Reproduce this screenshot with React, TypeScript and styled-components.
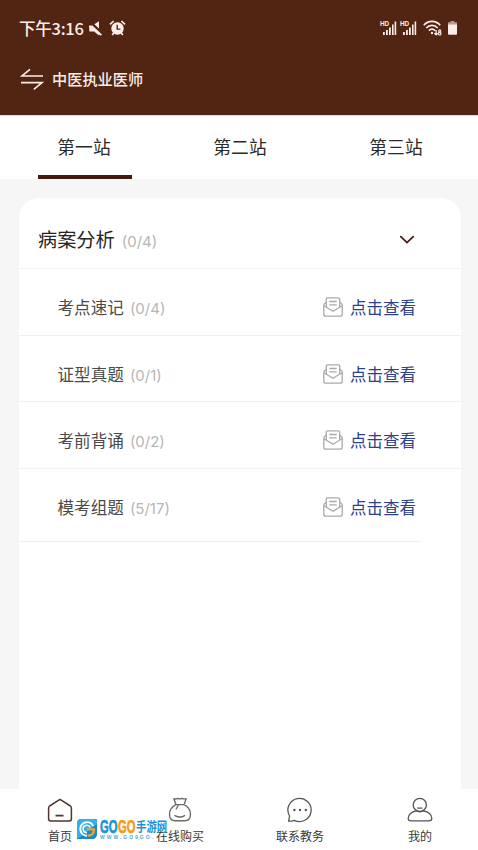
import React from 'react';
import styled, { createGlobalStyle } from 'styled-components';

const GlobalStyle = createGlobalStyle`
  * {
    box-sizing: border-box;
  }

  body {
    margin: 0;
    background: #f6f6f6;
    font-family: Roboto, 'Noto Sans CJK SC', sans-serif;
  }

  svg {
    display: block;
    flex: none;
  }

  button {
    border: none;
    background: none;
    padding: 0;
    font: inherit;
    cursor: pointer;
  }
`;

const Page = styled.div`
  display: flex;
  flex-direction: column;
  width: 478px;
  height: 850px;
  overflow: hidden;
`;

// Header
const Header = styled.header`
  flex: none;
  height: 116px;
  background: #522412;
  border-bottom: 1px solid #efd5cc;
  color: #fbeee9;
`;

const StatusBar = styled.div`
  display: flex;
  align-items: center;
  justify-content: space-between;
  height: 56px;
  padding: 0 21px 0 19px;
`;

const StatusGroup = styled.div<{ gap: number }>`
  display: flex;
  align-items: center;
  gap: ${({ gap }) => gap}px;
`;

const Clock = styled.span`
  font-family: 'Noto Sans CJK SC', sans-serif;
  font-size: 16.5px;
  font-weight: 500;
  line-height: 20px;
  letter-spacing: -0.25px;
`;

const TitleBar = styled.div`
  display: flex;
  align-items: center;
  gap: 8px;
  height: 46px;
  padding-left: 20px;
`;

const AppTitle = styled.h1`
  margin: 0;
  padding-top: 2px;
  font-size: 15.2px;
  font-weight: 500;
  line-height: 24px;
`;

// Tabs
const Tabs = styled.nav`
  display: flex;
  flex: none;
  height: 63px;
  padding: 0 4px 0 6px;
  background: #fff;
`;

const Tab = styled.button<{ $active: boolean }>`
  display: flex;
  flex: none;
  flex-direction: column;
  align-items: center;
  justify-content: space-between;
  width: 156px;
  padding-top: 19px;
  color: #2c2a2a;
  font-size: 17.8px;
  line-height: 26px;

  &::after {
    content: '';
    width: 94px;
    height: 4px;
    margin-left: 2px;
    background: ${({ $active }) => ($active ? '#421b10' : 'transparent')};
  }
`;

// Content
const Content = styled.main`
  display: flex;
  flex: 1;
  min-height: 0;
  padding: 19px 17px 0 19px;
`;

const Card = styled.section`
  flex: 1;
  background: #fff;
  border-radius: 20px 20px 0 0;
`;

const SectionHeader = styled.div`
  display: flex;
  align-items: center;
  justify-content: space-between;
  height: 71px;
  padding: 13px 46px 0 19px;
  border-bottom: 1px solid #f4f4f4;
`;

const Heading = styled.h2`
  display: flex;
  align-items: baseline;
  gap: 7px;
  margin: 0;
  padding-top: 4px;
  color: #262424;
  font-size: 19.2px;
  font-weight: 400;
  line-height: 28px;
`;

const Count = styled.span`
  color: #b6b6b6;
  font-family: Inter, sans-serif;
  font-size: 15px;
  font-weight: 400;
`;

const Row = styled.div<{ $height: number; $short?: boolean }>`
  display: flex;
  align-items: flex-start;
  justify-content: space-between;
  height: ${({ $height }) => $height}px;
  margin-right: ${({ $short }) => ($short ? 40 : 0)}px;
  padding: 25px ${({ $short }) => ($short ? 5 : 45)}px 0 38.5px;
  border-bottom: 1px solid #f0f0f0;
`;

const RowTitle = styled.div`
  display: flex;
  align-items: baseline;
  gap: 6px;
  padding-top: 2px;
  color: #4a4a4a;
  font-size: 16.6px;
  line-height: 26px;
`;

const ViewLink = styled.button`
  display: flex;
  align-items: center;
  gap: 7px;
  color: #2c408c;
  font-size: 16.5px;
  line-height: 26px;
`;

const LinkLabel = styled.span`
  padding-top: 2px;
  margin-bottom: -2px;
`;

// Bottom navigation
const BottomNav = styled.nav`
  position: relative;
  display: flex;
  flex: none;
  height: 61px;
  background: #fff;
`;

const NavItem = styled.button`
  display: flex;
  flex: none;
  flex-direction: column;
  align-items: center;
  width: 120px;
  padding-top: 7px;
  color: #3b3737;
  font-size: 12px;
  line-height: 18px;
  gap: 4px;
`;

// Site mark that floats over the bottom navigation
const SiteMark = styled.div`
  position: absolute;
  left: 76px;
  top: 29px;
  display: flex;
  align-items: center;
  gap: 2px;
`;

const MarkText = styled.div`
  display: flex;
  flex-direction: column;
`;

const MarkName = styled.div`
  display: flex;
  align-items: center;
  height: 16px;
  color: #1c93d6;
  white-space: nowrap;
`;

const MarkWord = styled.span<{ $color: string }>`
  display: block;
  width: 18px;
  color: ${({ $color }) => $color};
  font-family: 'Liberation Sans', sans-serif;
  font-size: 19px;
  font-weight: 700;
  line-height: 16px;
  -webkit-text-stroke: 0.7px currentColor;

  span {
    display: block;
    width: 30px;
    transform: scaleX(0.59);
    transform-origin: left;
  }
`;

const MarkSuffix = styled.span`
  display: block;
  width: 32px;
  font-size: 13px;
  font-weight: 700;
  line-height: 16px;
  transform: scaleX(0.8);
  transform-origin: left;
`;

const MarkUrl = styled.div`
  color: #4babdf;
  font-family: 'Liberation Sans', sans-serif;
  font-size: 5px;
  font-weight: 700;
  line-height: 5px;
  letter-spacing: 2px;
`;

const MuteIcon = () => (
  <svg width="13" height="15" viewBox="0 0 13 15" fill="currentColor">
    <path d="M0 4.5h3.4l9.6 9.1-1.2 1.2-2-1.6v1.3L5.2 10.6H.4zM5.3 3.2 10 .2v7.4z" />
  </svg>
);

const AlarmIcon = () => (
  <svg width="17" height="16" viewBox="0 0 17 16">
    <circle cx="8.5" cy="8.5" r="6.2" fill="currentColor" />
    <path d="M1 4.4 4.6 1M16 4.4 12.4 1" stroke="currentColor" strokeWidth="1.7" />
    <path d="m4.7 13-1.5 2m9.1-2 1.5 2" stroke="currentColor" strokeWidth="1.7" />
    <path d="M8.2 4.8v4.3h3.2" fill="none" stroke="#522412" strokeWidth="1.4" />
  </svg>
);

const SignalIcon = () => (
  <svg width="17" height="15" viewBox="0 0 17 15" fill="currentColor">
    <path d="M3 11h1.8v3H3zM6 9h1.8v5H6zM9 6.5h1.8V14H9zM12 3.5h1.6V14H12zM14.6.5h1.6V14h-1.6z" />
    <text x="0" y="5.2" fontFamily="Liberation Sans" fontSize="6.4" fontWeight="700">HD</text>
  </svg>
);

const WifiIcon = () => (
  <svg width="19" height="16" viewBox="0 0 19 16" fill="none" stroke="currentColor" strokeWidth="1.7">
    <path d="M.8 5.2c4.4-5.1 12-5.1 16.4 0M3.3 8c3.1-3.4 8.3-3.4 11.4 0M5.9 10.6c1.8-1.9 4.4-1.9 6.2 0" />
    <circle cx="9" cy="13" r="1.2" fill="currentColor" stroke="none" />
    <path d="M13.1 10v4.8m-1.6-1.6 1.6 1.7 1.6-1.7" strokeWidth="1.3" />
    <circle cx="16.7" cy="11" r="1.1" strokeWidth="1.1" />
    <circle cx="16.7" cy="13.7" r="1.3" strokeWidth="1.2" />
  </svg>
);

const BatteryIcon = () => (
  <svg width="9" height="14" viewBox="0 0 9 14">
    <path d="M2.6 0h3.8v1.3H9V4H0V1.3h2.6z" fill="#b59b91" />
    <path d="M0 3.5h9v9.3q0 1-1 1H1q-1 0-1-1z" fill="currentColor" />
  </svg>
);

const SwitchIcon = () => (
  <svg width="24" height="23" viewBox="0 0 24 23" fill="none" stroke="currentColor" strokeWidth="1.6">
    <path d="M23 8H2l8-6.6M1 14.6h21l-8.2 6.8" />
  </svg>
);

const ChevronIcon = () => (
  <svg width="16" height="10" viewBox="0 0 16 10" fill="none" stroke="#3d1d15" strokeWidth="1.8">
    <path d="m1.8 1.6 6.2 6 6.2-6" strokeLinecap="round" />
  </svg>
);

const MailIcon = () => (
  <svg width="20" height="20" viewBox="0 0 20 20" fill="none" stroke="#aaa" strokeWidth="1.3">
    <path d="M3.2 5.2 1.7 6.4Q.8 7.1.8 8.2v9q0 2 2 2h14.4q2 0 2-2v-9q0-1.1-.9-1.8l-1.5-1.2" />
    <path d="M3.3 10V2q0-1.2 1.2-1.2h11q1.2 0 1.2 1.2v8M1 8.8l9 5.4 9-5.4M6.3 4.5h7.4M6.3 7.8h7.4" />
  </svg>
);

const HomeIcon = () => (
  <svg width="26" height="28" viewBox="0 0 26 28" fill="none" stroke="#51362f" strokeWidth="1.5">
    <path d="M13 3.3 23.4 10q1 .8 1 2v11.1q0 1.9-2 1.9H3.6q-2 0-2-1.9V12q0-1.2 1-2z" strokeLinejoin="round" />
    <path d="M8.5 19.6h8" strokeWidth="1.8" />
  </svg>
);

const BagIcon = () => (
  <svg width="26" height="28" viewBox="0 0 26 28" fill="none" stroke="#6d6a6a" strokeWidth="1.4">
    <path d="M9 8.4 6.8 2.8q2.3.5 3.8-.5 2.3 1.1 4.3 0 1.7 1 4.3.3L17.2 8.4" strokeLinejoin="round" />
    <path d="M8.6 8.6h9M8.8 8.6C4.6 10.8 2.5 14.5 2.5 18.3q0 6.5 5.7 6.5h9.6q5.7 0 5.7-6.5c0-3.8-2.1-7.5-6.3-9.7" />
    <path d="M8 19.6q5 2.8 9.6 0M11.4 9l-2.2 4" strokeLinecap="round" />
  </svg>
);

const ChatIcon = () => (
  <svg width="26" height="28" viewBox="0 0 26 28" fill="none" stroke="#555" strokeWidth="1.3">
    <path d="M1.6 25.2 2.6 20A11.6 11.6 0 1 1 7.2 24.3q-2.3.9-5.6.9z" strokeLinejoin="round" />
    <g fill="#555" stroke="none">
      <circle cx="7.4" cy="14" r="1.2" />
      <circle cx="13" cy="14" r="1.2" />
      <circle cx="18.8" cy="14" r="1.2" />
    </g>
  </svg>
);

const UserIcon = () => (
  <svg width="26" height="28" viewBox="0 0 26 28" fill="none" stroke="#555" strokeWidth="1.3">
    <circle cx="12.8" cy="8.9" r="6.6" />
    <path d="M8.7 15C4.8 15.7 1.2 18.6 1.2 22.2q0 2.6 2.8 2.6h18q2.8 0 2.8-2.6c0-3.6-3.6-6.5-7.9-7.2-2.4.9-5.8.9-8.2 0z" />
    <path d="M10.2 11.8q2.6.6 5.2 0" />
  </svg>
);

const MarkLogo = () => (
  <svg width="22" height="22" viewBox="0 0 22 22" fill="none">
    <path d="M5 1h16v15q0 5-5 5H1V6q0-5 4-5z" fill="#1689d1" />
    <path d="M5 1h16v5L3 20H1V6q0-5 4-5z" fill="#37aee8" />
    <path d="M17.2 8A6.8 6.8 0 1 0 11 17.8" stroke="#fff" strokeWidth="2" />
    <path d="M14.2 9.4A3.7 3.7 0 1 0 11 14.7" stroke="#fff" strokeWidth="1.5" />
    <path d="M11 11.4h7c0 3.7-2.7 6-6.3 6.3" stroke="#f9a326" strokeWidth="2.2" />
  </svg>
);

const tabs = ['第一站', '第二站', '第三站'];

const rows = [
  { title: '考点速记', count: '(0/4)', height: 67 },
  { title: '证型真题', count: '(0/1)', height: 66 },
  { title: '考前背诵', count: '(0/2)', height: 67 },
  { title: '模考组题', count: '(5/17)', height: 73, short: true },
];

const navItems = [
  { label: '首页', icon: <HomeIcon /> },
  { label: '在线购买', icon: <BagIcon /> },
  { label: '联系教务', icon: <ChatIcon /> },
  { label: '我的', icon: <UserIcon /> },
];

const App: React.FC = () => {
  const [activeTab, setActiveTab] = React.useState(0);
  const [open, setOpen] = React.useState(true);

  return (
    <Page>
      <GlobalStyle />
      <Header>
        <StatusBar>
          <StatusGroup gap={5}>
            <Clock>下午3:16</Clock>
            <StatusGroup gap={7}>
              <MuteIcon />
              <AlarmIcon />
            </StatusGroup>
          </StatusGroup>
          <StatusGroup gap={6}>
            <StatusGroup gap={3}>
              <SignalIcon />
              <SignalIcon />
            </StatusGroup>
            <WifiIcon />
            <BatteryIcon />
          </StatusGroup>
        </StatusBar>
        <TitleBar>
          <SwitchIcon />
          <AppTitle>中医执业医师</AppTitle>
        </TitleBar>
      </Header>

      <Tabs>
        {tabs.map((tab, index) => (
          <Tab key={tab} $active={activeTab === index} onClick={() => setActiveTab(index)}>
            {tab}
          </Tab>
        ))}
      </Tabs>

      <Content>
        <Card>
          <SectionHeader>
            <Heading>
              病案分析 <Count>(0/4)</Count>
            </Heading>
            <button aria-label="展开" onClick={() => setOpen(!open)}>
              <ChevronIcon />
            </button>
          </SectionHeader>
          {open &&
            rows.map((row) => (
              <Row key={row.title} $height={row.height} $short={row.short}>
                <RowTitle>
                  {row.title} <Count>{row.count}</Count>
                </RowTitle>
                <ViewLink>
                  <MailIcon />
                  <LinkLabel>点击查看</LinkLabel>
                </ViewLink>
              </Row>
            ))}
        </Card>
      </Content>

      <BottomNav>
        {navItems.map((item) => (
          <NavItem key={item.label}>
            {item.icon}
            {item.label}
          </NavItem>
        ))}
        <SiteMark>
          <MarkLogo />
          <MarkText>
            <MarkName>
              <MarkWord $color="#1c93d6"><span>GO</span></MarkWord>
              <MarkWord $color="#f79a1c"><span>GO</span></MarkWord>
              <MarkSuffix>手游网</MarkSuffix>
            </MarkName>
            <MarkUrl>WWW.GO9GO.</MarkUrl>
          </MarkText>
        </SiteMark>
      </BottomNav>
    </Page>
  );
};

export default App;
